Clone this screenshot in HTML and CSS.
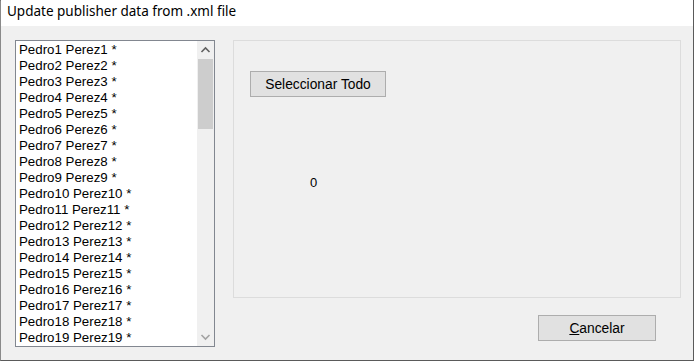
FILE: index.html
```html
<!DOCTYPE html>
<html>
<head>
<meta charset="utf-8">
<link rel="stylesheet" href="styles.css">
</head>
<body>
<div class="window">
  <div class="titlebar">Update publisher data from .xml file</div>
  <div class="client">
    <div class="listbox">
      <ul class="items">
        <li>Pedro1 Perez1 *</li>
        <li>Pedro2 Perez2 *</li>
        <li>Pedro3 Perez3 *</li>
        <li>Pedro4 Perez4 *</li>
        <li>Pedro5 Perez5 *</li>
        <li>Pedro6 Perez6 *</li>
        <li>Pedro7 Perez7 *</li>
        <li>Pedro8 Perez8 *</li>
        <li>Pedro9 Perez9 *</li>
        <li>Pedro10 Perez10 *</li>
        <li>Pedro11 Perez11 *</li>
        <li>Pedro12 Perez12 *</li>
        <li>Pedro13 Perez13 *</li>
        <li>Pedro14 Perez14 *</li>
        <li>Pedro15 Perez15 *</li>
        <li>Pedro16 Perez16 *</li>
        <li>Pedro17 Perez17 *</li>
        <li>Pedro18 Perez18 *</li>
        <li>Pedro19 Perez19 *</li>
      </ul>
      <div class="scrollbar">
        <div class="arrow">
          <svg width="17" height="17" viewBox="0 0 17 17"><polyline points="4.5,11 8.5,7 12.5,11" fill="none" stroke="#606060" stroke-width="1.6"/></svg>
        </div>
        <div class="track"><div class="thumb"></div></div>
        <div class="arrow">
          <svg width="17" height="17" viewBox="0 0 17 17"><polyline points="4.5,6 8.5,10 12.5,6" fill="none" stroke="#a3a3a3" stroke-width="1.6"/></svg>
        </div>
      </div>
    </div>
    <div class="right">
      <div class="groupbox">
        <button class="btn select-all">Seleccionar Todo</button>
        <div class="count">0</div>
      </div>
      <button class="btn cancel"><span class="u">C</span>ancelar</button>
    </div>
  </div>
</div>
</body>
</html>
```
FILE: styles.css
```css
html, body {
  margin: 0;
  padding: 0;
}
body {
  width: 694px;
  height: 361px;
  overflow: hidden;
  font-family: "Liberation Sans", Arial, sans-serif;
}
.window {
  box-sizing: border-box;
  width: 694px;
  height: 361px;
  border-top: 1px solid #5a5a5a;
  border-right: 1px solid #5a5a5a;
  border-bottom: 1px solid #5a5a5a;
  border-left: 1px solid #8a8a8a;
  background: #f0f0f0;
  display: flex;
  flex-direction: column;
}
.titlebar {
  height: 25px;
  background: #ffffff;
  font-family: "Noto Sans", "Open Sans", sans-serif;
  font-size: 13.5px;
  line-height: 25px;
  padding-left: 6px;
  color: #000;
  margin-top: -2px;
  padding-bottom: 2px;
}
.client {
  flex: 1;
  display: flex;
  gap: 18px;
  padding: 14px 0 0 14px;
}
.listbox {
  box-sizing: border-box;
  width: 200px;
  height: 307px;
  border: 1px solid #828790;
  background: #fff;
  display: flex;
  overflow: hidden;
}
.items {
  list-style: none;
  margin: 0;
  padding: 1px 0 0 3px;
  flex: 1;
  font-size: 13.3px;
  color: #000;
}
.items li {
  height: 16px;
  line-height: 16px;
  white-space: nowrap;
}
.scrollbar {
  width: 17px;
  background: #f0f0f0;
  display: flex;
  flex-direction: column;
}
.arrow {
  height: 17px;
  display: flex;
}
.track {
  flex: 1;
  padding-top: 1px;
}
.thumb {
  width: 15px;
  margin-left: 1px;
  height: 70px;
  background: #cdcdcd;
}
.right {
  display: flex;
  flex-direction: column;
  align-items: flex-end;
}
.groupbox {
  box-sizing: border-box;
  width: 448px;
  height: 258px;
  border: 1px solid #dcdcdc;
  display: flex;
  flex-direction: column;
  align-items: flex-start;
  padding: 30px 0 0 16px;
}
.btn {
  box-sizing: border-box;
  background: #e1e1e1;
  border: 1px solid #adadad;
  font-family: "Liberation Sans", Arial, sans-serif;
  color: #000;
  padding: 0;
  margin: 0;
}
.select-all {
  width: 136px;
  height: 26px;
  font-size: 13.8px;
}
.count {
  margin: 78px 0 0 60px;
  font-size: 13px;
  line-height: 16px;
}
.cancel {
  width: 118px;
  height: 26px;
  font-size: 13.8px;
  margin: 17px 25px 0 0;
}
.u {
  text-decoration: underline;
}
```
